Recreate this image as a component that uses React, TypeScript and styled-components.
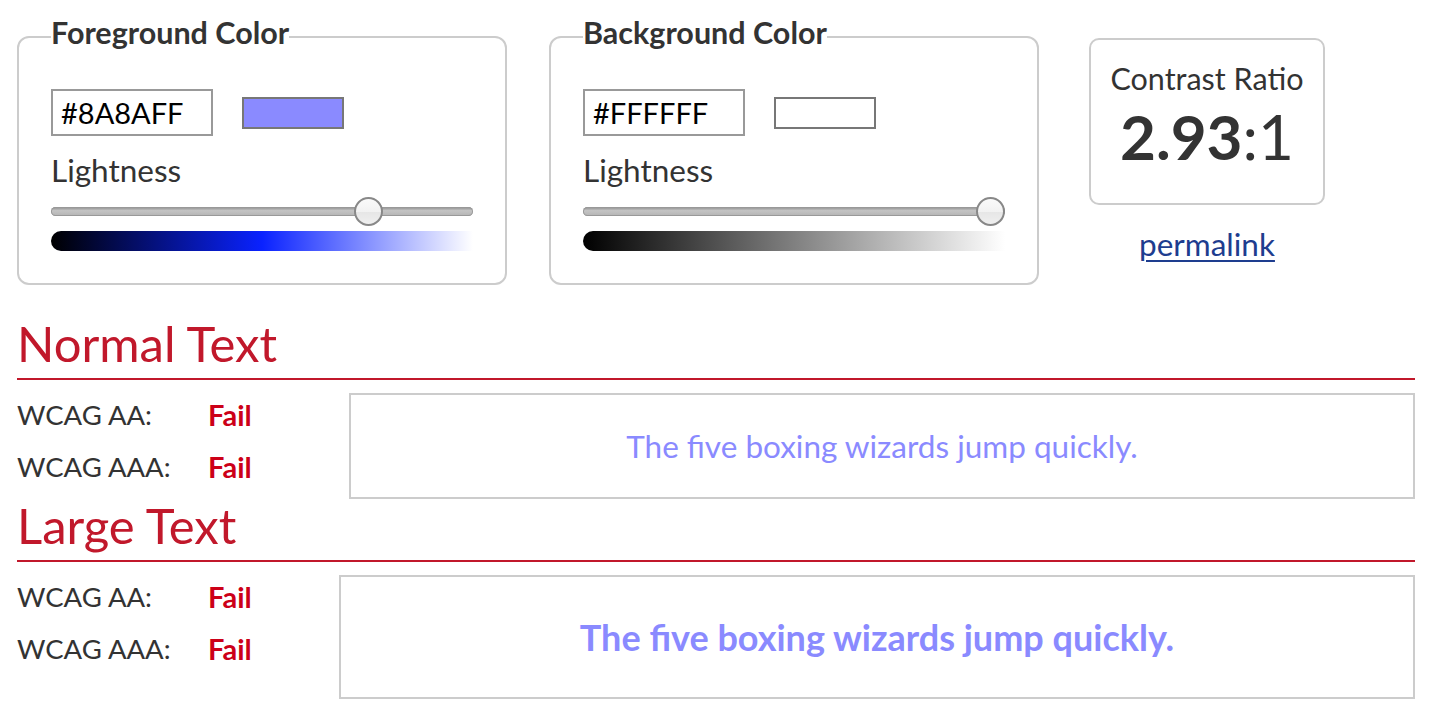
import React from "react";
import styled, { createGlobalStyle } from "styled-components";

const Global = createGlobalStyle`
  html, body { margin: 0; padding: 0; background: #fff; }
  body { font-family: Lato, "Open Sans", sans-serif; color: #333; }
`;

const Page = styled.div`
  width: 1398px;
  padding: 15px 0 0 17px;
`;

const TopRow = styled.div`
  display: flex;
  align-items: flex-start;
`;

const Field = styled.fieldset<{ $gap?: number }>`
  width: 490px;
  box-sizing: border-box;
  margin: 0 ${(p) => p.$gap ?? 0}px 0 0;
  padding: 30px 32px 32px;
  border: 2px solid #ccc;
  border-radius: 12px;
`;

const Legend = styled.legend`
  padding: 0 0 10px;
  font-size: 30.5px;
  font-weight: 700;
  color: #333;
  line-height: 34px;
`;

const InputRow = styled.div`
  display: flex;
  align-items: center;
  gap: 29px;
`;

const HexInput = styled.input`
  width: 162px;
  height: 47px;
  box-sizing: border-box;
  border: 2px solid #999;
  padding: 0 0 0 8px;
  font-family: Lato, "Open Sans", sans-serif;
  font-size: 29px;
  color: #000;
  background: #fff;
  outline: none;
`;

const Swatch = styled.div`
  width: 102px;
  height: 32px;
  box-sizing: border-box;
  border: 2px solid #777;
`;

const Label = styled.div`
  margin-top: 14px;
  font-size: 31.5px;
  line-height: 40px;
  color: #333;
`;

const Track = styled.div`
  position: relative;
  margin-top: 17px;
  height: 9px;
  border-radius: 5px;
  background: linear-gradient(#8a8a8a, #c4c4c4 40%, #b4b4b4);
  box-shadow: inset 0 0 0 1px #999;
`;

const Thumb = styled.div`
  position: absolute;
  top: 50%;
  width: 29px;
  height: 29px;
  margin-top: -14.5px;
  box-sizing: border-box;
  border-radius: 50%;
  border: 2px solid #888;
  background: linear-gradient(#fafafa, #f2f2f2 50%, #e6e6e6 51%, #efefef);
`;

const Gradient = styled.div`
  margin-top: 15px;
  height: 20px;
  border-radius: 10px 0 0 10px;
`;

const RatioCol = styled.div`
  margin-left: 50px;
  display: flex;
  flex-direction: column;
  align-items: center;
`;

const RatioBox = styled.div`
  margin-top: 23px;
  width: 236px;
  height: 167px;
  box-sizing: border-box;
  border: 2px solid #ccc;
  border-radius: 10px;
  display: flex;
  flex-direction: column;
  align-items: center;
  padding-top: 18px;
`;

const RatioTitle = styled.div`
  font-size: 30.5px;
  line-height: 40px;
  color: #333;
`;

const RatioValue = styled.div`
  font-size: 62px;
  line-height: 76px;
  color: #333;
  b { font-weight: 700; }
  span { font-weight: 400; }
`;

const Permalink = styled.a`
  margin-top: 20px;
  font-size: 31.5px;
  color: #1e3d8f;
  text-decoration: underline;
  text-underline-offset: 4px;
  text-decoration-thickness: 2px;
`;

const Section = styled.section<{ $mt: number }>`
  margin-top: ${(p) => p.$mt}px;
`;

const Heading = styled.h2`
  margin: 0;
  font-size: 49px;
  font-weight: 400;
  line-height: 56px;
  color: #c1182b;
  border-bottom: 2px solid #c1182b;
  padding-bottom: 7px;
`;

const Body = styled.div`
  display: flex;
  margin-top: 13px;
`;

const Results = styled.div<{ $w: number }>`
  width: ${(p) => p.$w}px;
  flex: none;
  margin-top: -5px;
`;

const ResultRow = styled.div`
  display: flex;
  height: 52px;
  align-items: center;
  font-size: 27.5px;
`;

const ResultLabel = styled.span`
  width: 191px;
  color: #333;
`;

const Fail = styled.span`
  color: #cc0018;
  font-weight: 700;
  font-size: 29px;
`;

const Sample = styled.div<{ $h: number; $large?: boolean }>`
  flex: 1;
  height: ${(p) => p.$h}px;
  box-sizing: border-box;
  border: 2px solid #ccc;
  display: flex;
  align-items: center;
  justify-content: center;
  color: #8a8aff;
  font-size: ${(p) => (p.$large ? 36 : 31.5)}px;
  font-weight: ${(p) => (p.$large ? 700 : 400)};
`;

type ColorFieldProps = {
  title: string;
  hex: string;
  lightness: number;
  gradient: string;
  gap?: number;
};

const ColorField = ({ title, hex, lightness, gradient, gap }: ColorFieldProps) => (
  <Field $gap={gap}>
    <Legend>{title}</Legend>
    <InputRow>
      <HexInput defaultValue={hex} aria-label={title} />
      <Swatch style={{ background: hex }} />
    </InputRow>
    <Label>Lightness</Label>
    <Track>
      <Thumb style={{ left: `calc((100% - 29px) * ${lightness})` }} />
    </Track>
    <Gradient style={{ background: gradient }} />
  </Field>
);

const ResultSection = ({
  title,
  mt,
  w,
  h,
  large,
}: {
  title: string;
  mt: number;
  w: number;
  h: number;
  large?: boolean;
}) => (
  <Section $mt={mt}>
    <Heading>{title}</Heading>
    <Body>
      <Results $w={w}>
        <ResultRow>
          <ResultLabel>WCAG AA:</ResultLabel>
          <Fail>Fail</Fail>
        </ResultRow>
        <ResultRow>
          <ResultLabel>WCAG AAA:</ResultLabel>
          <Fail>Fail</Fail>
        </ResultRow>
      </Results>
      <Sample $h={h} $large={large}>
        The five boxing wizards jump quickly.
      </Sample>
    </Body>
  </Section>
);

export default function App() {
  return (
    <>
      <Global />
      <Page>
        <TopRow>
          <ColorField
            title="Foreground Color"
            hex="#8A8AFF"
            lightness={0.77}
            gradient="linear-gradient(to right, #000, #0a22ff 50%, #fff)"
            gap={42}
          />
          <ColorField
            title="Background Color"
            hex="#FFFFFF"
            lightness={1}
            gradient="linear-gradient(to right, #000, #808080 50%, #fff)"
          />
          <RatioCol>
            <RatioBox>
              <RatioTitle>Contrast Ratio</RatioTitle>
              <RatioValue>
                <b>2.93</b>
                <span>:1</span>
              </RatioValue>
            </RatioBox>
            <Permalink href="#">permalink</Permalink>
          </RatioCol>
        </TopRow>
        <ResultSection title="Normal Text" mt={30} w={332} h={106} />
        <ResultSection title="Large Text" mt={-2} w={322} h={124} large />
      </Page>
    </>
  );
}
